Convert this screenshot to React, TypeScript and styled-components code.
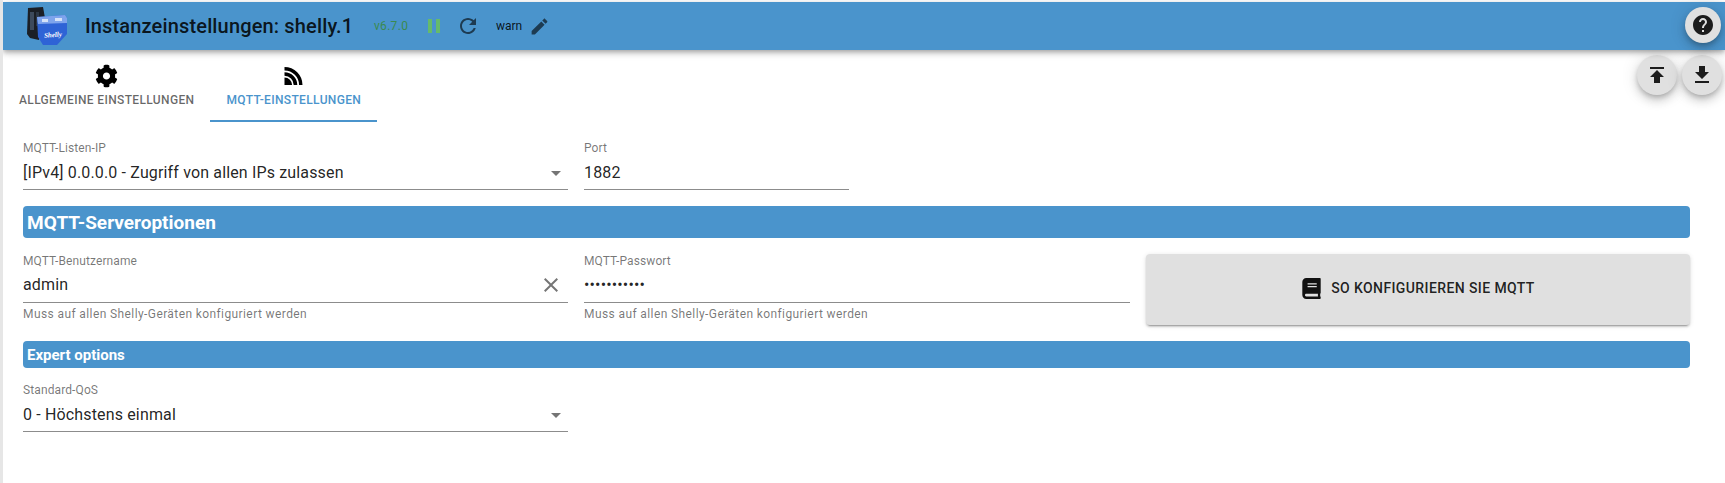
import React from 'react'
import styled, { createGlobalStyle } from 'styled-components'
import { FaBook, FaCog } from 'react-icons/fa'

const BLUE = '#4a94cc'

const icons = {
  refresh:
    'M17.65 6.35C16.2 4.9 14.21 4 12 4c-4.42 0-7.99 3.58-7.99 8s3.57 8 7.99 8c3.73 0 6.84-2.55 7.73-6h-2.08c-.82 2.33-3.04 4-5.65 4-3.31 0-6-2.69-6-6s2.69-6 6-6c1.66 0 3.14.69 4.22 1.78L13 11h7V4l-2.35 2.35z',
  edit: 'M3 17.25V21h3.75L17.81 9.94l-3.75-3.75L3 17.25zM20.71 7.04c.39-.39.39-1.02 0-1.41l-2.34-2.34c-.39-.39-1.02-.39-1.41 0l-1.83 1.83 3.75 3.75 1.83-1.83z',
  help: 'M12 2C6.48 2 2 6.48 2 12s4.48 10 10 10 10-4.48 10-10S17.52 2 12 2zm1 17h-2v-2h2v2zm2.07-7.75l-.9.92C13.45 12.9 13 13.5 13 15h-2v-.5c0-1.1.45-2.1 1.17-2.83l1.24-1.26c.37-.36.59-.86.59-1.41 0-1.1-.9-2-2-2s-2 .9-2 2H8c0-2.21 1.79-4 4-4s4 1.79 4 4c0 .88-.36 1.68-.93 2.25z',
  publish: 'M5 4v2h14V4H5zm0 10h4v6h6v-6h4l-7-7-7 7z',
  download: 'M19 9h-4V3H9v6H5l7 7 7-7zM5 18v2h14v-2H5z',
  close: 'M19 6.41L17.59 5 12 10.59 6.41 5 5 6.41 10.59 12 5 17.59 6.41 19 12 13.41 17.59 19 19 17.59 13.41 12z',
  arrow: 'M7 10l5 5 5-5z',
}

const Icon = ({ d, size = 24, color = 'currentColor' }: { d: string; size?: number; color?: string }) => (
  <svg width={size} height={size} viewBox="0 0 24 24" fill={color}>
    <path d={d} />
  </svg>
)

const RssIcon = () => (
  <svg width="19" height="24" viewBox="0 -3 18 24" fill="#000">
    <path d="M0 0A18 18 0 0 1 18 18H14.6A14.6 14.6 0 0 0 0 3.4Z" />
    <path d="M0 5.2A12.8 12.8 0 0 1 12.8 18H9.2A9.2 9.2 0 0 0 0 8.8Z" />
    <path d="M0 10.4A7.6 7.6 0 0 1 7.6 18H0Z" />
  </svg>
)

const Logo = () => (
  <svg width="44" height="44" viewBox="0 0 44 44">
    <path d="M4 4 L19 3 L21 14 L15 36 L6 34 L3 30 Z" fill="#1b1f26" />
    <rect x="6" y="8" width="4" height="18" fill="#3d4a5c" />
    <rect x="12" y="8" width="3" height="14" fill="#2c3644" />
    <path d="M13 13 L41 11 L43 14 L43 30 L33 41 L19 41 L14 33 Z" fill="#2e63d6" />
    <path d="M13 13 L41 11 L43 14 L43 19 L14 20 Z" fill="#7ea4ec" />
    <rect x="18" y="15" width="6" height="3" fill="#d5e2f8" />
    <rect x="31" y="14" width="7" height="3" fill="#d5e2f8" />
    <text
      x="20"
      y="33"
      fontFamily="Liberation Serif"
      fontStyle="italic"
      fontWeight="700"
      fontSize="7"
      fill="#fff"
      transform="rotate(-4 30 31)"
    >
      Shelly
    </text>
  </svg>
)

const App = () => (
  <Page>
    <GlobalStyle />
    <Header>
      <LogoBox>
        <Logo />
      </LogoBox>
      <Title>Instanzeinstellungen: shelly.1</Title>
      <Version>v6.7.0</Version>
      <PauseIcon>
        <i />
        <i />
      </PauseIcon>
      <RefreshBox>
        <Icon d={icons.refresh} color="rgba(0,0,0,0.6)" />
      </RefreshBox>
      <LogLevel>warn</LogLevel>
      <EditBox>
        <Icon d={icons.edit} size={21} color="rgba(0,0,0,0.6)" />
      </EditBox>
      <HelpButton>
        <Icon d={icons.help} color="#1c1c1c" />
      </HelpButton>
    </Header>

    <Content>
      <FabRow>
        <Fab>
          <Icon d={icons.publish} color="#1c1c1c" />
        </Fab>
        <Fab>
          <Icon d={icons.download} color="#1c1c1c" />
        </Fab>
      </FabRow>

      <Tabs>
        <Tab>
          <FaCog size={23} />
          <span>Allgemeine Einstellungen</span>
        </Tab>
        <Tab $active>
          <RssIcon />
          <span>MQTT-Einstellungen</span>
        </Tab>
      </Tabs>

      <Form>
        <Row>
          <Field $width={545}>
            <Label>MQTT-Listen-IP</Label>
            <Value>
              <span>[IPv4] 0.0.0.0 - Zugriff von allen IPs zulassen</span>
              <Icon d={icons.arrow} color="rgba(0,0,0,0.54)" />
            </Value>
          </Field>
          <Field $width={265}>
            <Label>Port</Label>
            <Value>
              <span>1882</span>
            </Value>
          </Field>
        </Row>

        <SectionBar $large>MQTT-Serveroptionen</SectionBar>

        <ServerRow>
          <Field $width={545}>
            <Label>MQTT-Benutzername</Label>
            <Value>
              <span>admin</span>
              <ClearBox>
                <Icon d={icons.close} color="rgba(0,0,0,0.54)" />
              </ClearBox>
            </Value>
            <Helper>Muss auf allen Shelly-Geräten konfiguriert werden</Helper>
          </Field>
          <Field $width={546}>
            <Label>MQTT-Passwort</Label>
            <Value>
              <span>•••••••••••</span>
            </Value>
            <Helper>Muss auf allen Shelly-Geräten konfiguriert werden</Helper>
          </Field>
          <HowToButton>
            <FaBook size={21} color="#111" />
            <span>So konfigurieren Sie MQTT</span>
          </HowToButton>
        </ServerRow>

        <SectionBar>Expert options</SectionBar>

        <Row>
          <Field $width={545}>
            <Label>Standard-QoS</Label>
            <Value>
              <span>0 - Höchstens einmal</span>
              <Icon d={icons.arrow} color="rgba(0,0,0,0.54)" />
            </Value>
          </Field>
        </Row>
      </Form>
    </Content>
  </Page>
)

const GlobalStyle = createGlobalStyle`
  html, body {
    margin: 0;
    padding: 0;
    background: #fff;
    font-family: Roboto, "Liberation Sans", sans-serif;
    color: rgba(0, 0, 0, 0.87);
  }
`
const Page = styled.div`
  width: 1725px;
  height: 483px;
  box-sizing: border-box;
  padding-top: 2px;
  border-left: 3px solid #e6e6e6;
  overflow: hidden;
  position: relative;
`
const Header = styled.header`
  position: relative;
  z-index: 2;
  height: 48px;
  background: ${BLUE};
  display: flex;
  align-items: center;
  box-shadow: 0 2px 4px -1px rgba(0, 0, 0, 0.2), 0 4px 5px 0 rgba(0, 0, 0, 0.14), 0 1px 10px 0 rgba(0, 0, 0, 0.12);
`
const LogoBox = styled.div`
  width: 44px;
  height: 44px;
  margin-left: 21px;
`
const Title = styled.h1`
  margin: 0 0 0 17px;
  font-size: 20px;
  font-weight: 500;
  line-height: 24px;
  letter-spacing: 0.15px;
  width: 289px;
  white-space: nowrap;
`
const Version = styled.span`
  font-size: 12px;
  color: #3a8a50;
  width: 54px;
  letter-spacing: 0.3px;
`
const PauseIcon = styled.div`
  display: flex;
  gap: 4px;
  width: 27.5px;
  i {
    display: block;
    width: 4px;
    height: 14px;
    background: #66bb6a;
  }
`
const RefreshBox = styled.div`
  display: flex;
  width: 40.5px;
`
const LogLevel = styled.span`
  font-size: 12px;
  width: 32.5px;
`
const EditBox = styled.div`
  display: flex;
`
const HelpButton = styled.button`
  position: absolute;
  right: 4px;
  top: 5px;
  width: 36px;
  height: 36px;
  padding: 0;
  border: 0;
  border-radius: 50%;
  background: #e0e0e0;
  display: flex;
  align-items: center;
  justify-content: center;
  box-shadow: 0 3px 5px -1px rgba(0, 0, 0, 0.2), 0 6px 10px 0 rgba(0, 0, 0, 0.14), 0 1px 18px 0 rgba(0, 0, 0, 0.12);
`
const Content = styled.main`
  position: relative;
`
const FabRow = styled.div`
  position: absolute;
  top: 5px;
  right: 3px;
  display: flex;
  gap: 5px;
`
const Fab = styled.button`
  width: 40px;
  height: 40px;
  padding: 0;
  border: 0;
  border-radius: 50%;
  background: #e0e0e0;
  display: flex;
  align-items: center;
  justify-content: center;
  box-shadow: 0 3px 5px -1px rgba(0, 0, 0, 0.2), 0 6px 10px 0 rgba(0, 0, 0, 0.14), 0 1px 18px 0 rgba(0, 0, 0, 0.12);
`
const Tabs = styled.nav`
  display: flex;
  height: 72px;
`
const Tab = styled.div<{ $active?: boolean }>`
  box-sizing: border-box;
  height: 72px;
  padding: 14px 16px 0;
  display: flex;
  flex-direction: column;
  align-items: center;
  font-size: 12px;
  font-weight: 500;
  letter-spacing: 0.35px;
  text-transform: uppercase;
  color: ${p => (p.$active ? BLUE : 'rgba(0,0,0,0.6)')};
  border-bottom: 2px solid ${p => (p.$active ? BLUE : 'transparent')};
  svg {
    color: #000;
    height: 24px;
    margin-bottom: 5px;
  }
`
const Form = styled.form`
  padding: 18px 35px 0 20px;
`
const Row = styled.div`
  display: flex;
  gap: 16px;
`
const Field = styled.div<{ $width: number }>`
  width: ${p => p.$width}px;
  flex: none;
`
const Label = styled.div`
  font-size: 12px;
  line-height: 16px;
  letter-spacing: 0.11px;
  color: rgba(0, 0, 0, 0.54);
  height: 16px;
`
const Value = styled.div`
  height: 34px;
  box-sizing: border-box;
  display: flex;
  align-items: center;
  justify-content: space-between;
  font-size: 16px;
  letter-spacing: 0.15px;
  border-bottom: 1px solid #8c8c8c;
`
const ClearBox = styled.div`
  display: flex;
  margin-right: 5px;
`
const Helper = styled.div`
  font-size: 12px;
  line-height: 14px;
  letter-spacing: 0.4px;
  margin-top: 3px;
  color: rgba(0, 0, 0, 0.54);
`
const ServerRow = styled(Row)`
  align-items: flex-start;
  ${Label} {
    margin-top: -1px;
  }
  ${Value} {
    padding-bottom: 2px;
  }
  ${Helper} {
    margin-top: 4px;
  }
`
const SectionBar = styled.h2<{ $large?: boolean }>`
  margin: ${p => (p.$large ? '16px 0' : '16px 0 14px')};
  padding: 0 4px;
  height: ${p => (p.$large ? 32 : 27)}px;
  line-height: ${p => (p.$large ? 33 : 29)}px;
  background: ${BLUE};
  border-radius: 4px;
  color: #fff;
  font-size: ${p => (p.$large ? 19 : 15)}px;
  font-weight: 700;
`
const HowToButton = styled.button`
  width: 544px;
  height: 71px;
  flex: none;
  border: 0;
  border-radius: 4px;
  padding: 0 0 3px;
  background: #e0e0e0;
  display: flex;
  align-items: center;
  justify-content: center;
  gap: 9px;
  font-family: inherit;
  font-size: 14px;
  font-weight: 500;
  letter-spacing: 0.4px;
  text-transform: uppercase;
  color: rgba(0, 0, 0, 0.87);
  box-shadow: 0 3px 1px -2px rgba(0, 0, 0, 0.2), 0 2px 2px 0 rgba(0, 0, 0, 0.14), 0 1px 5px 0 rgba(0, 0, 0, 0.12);
`

export default App
